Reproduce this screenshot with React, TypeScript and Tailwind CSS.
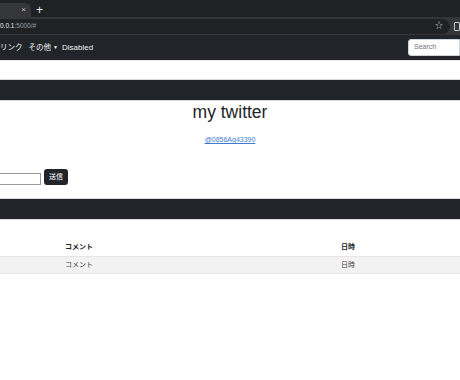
const font = "font-['Liberation_Sans','Noto_Sans_CJK_JP',sans-serif]";

function BrowserChrome() {
  return (
    <>
      <div className="flex h-[17px] items-end bg-[#202124]">
        <div className="flex h-[14px] w-[31px] items-center justify-end rounded-tr-[6px] bg-[#35363a] pr-[5px]">
          <span className="text-[8px] leading-none text-[#c4c7c5]">×</span>
        </div>
        <span className="ml-[5px] self-center pt-[2px] text-[12px] leading-none text-[#e8eaed]">+</span>
      </div>
      <div className="flex h-[18px] items-center bg-[#35363a]">
        <div className="flex h-[15px] w-[452px] items-center justify-between rounded-r-full bg-[#202124] pr-[7px]">
          <span className="text-[6.5px] leading-none">
            <span className="text-[#e8eaed]">0.0.1</span>
            <span className="text-[#9aa0a6]">:5000/#</span>
          </span>
          <span className="text-[8px] leading-none text-[#c4c7c5]">☆</span>
        </div>
        <div className="ml-[4px] h-[9px] w-[6px] rounded-[1px] border border-[#c4c7c5]" />
      </div>
    </>
  );
}

function Navbar() {
  return (
    <div className="flex h-[25px] items-center justify-between bg-[#212529] text-[7.5px] text-[#f1f1f1]">
      <div className="flex items-center">
        <span>リンク</span>
        <span className="ml-[6px]">その他</span>
        <span className="ml-[2px] text-[5px]">▼</span>
        <span className="ml-[4px] text-[8px]">Disabled</span>
      </div>
      <div className="flex h-[17px] w-[52px] items-center rounded-l-[3px] border border-[#ced4da] bg-white pl-[5px] text-[7px] text-[#6c757d]">
        Search
      </div>
    </div>
  );
}

function Band() {
  return <div className="h-[22px] border-y border-[#d8dadd] bg-[#212529]" />;
}

export default function App() {
  return (
    <div className={`${font} h-[380px] w-[460px] overflow-hidden bg-white`}>
      <BrowserChrome />
      <Navbar />
      <div className="h-[19px] border-t border-[#e8e8e8]" />
      <Band />
      <h1 className="mt-[1px] text-center text-[17.5px] leading-[20px] text-[#212529]">my twitter</h1>
      <div className="mt-[13px] text-center text-[7px] leading-[10px]">
        <a href="#" className="text-[#3d7bd0] underline">@0856Ag43390</a>
      </div>
      <div className="mt-[24px] flex items-end">
        <input className="h-[12px] w-[41px] border border-l-0 border-[#9a9a9a] bg-white" />
        <button className="ml-[3px] h-[16px] w-[24px] rounded-[3px] bg-[#212529] text-[7px] text-white">送信</button>
      </div>
      <div className="mt-[13px]">
        <Band />
      </div>
      <div className="mt-[18px] text-[7px] text-[#212529]">
        <div className="grid h-[18px] grid-cols-[65px_276px_1fr] items-center font-bold">
          <span />
          <span>コメント</span>
          <span>日時</span>
        </div>
        <div className="grid h-[18px] grid-cols-[65px_276px_1fr] items-center border-y border-[#e6e6e6] bg-[#f2f2f2] text-[#444]">
          <span />
          <span>コメント</span>
          <span>日時</span>
        </div>
      </div>
    </div>
  );
}
